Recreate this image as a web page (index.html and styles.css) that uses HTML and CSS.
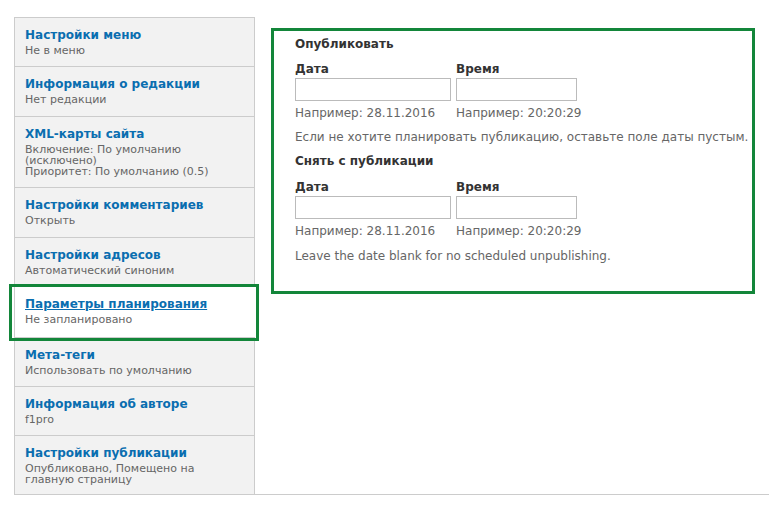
FILE: index.html
```html
<!DOCTYPE html>
<html lang="ru">
<head>
    <meta charset="UTF-8">
    <title>Параметры планирования</title>
    <link rel="stylesheet" href="styles.css">
</head>
<body>
    <div class="vertical-tabs">
        <ul class="tabs-menu">
            <li class="tab-item">
                <a href="#" class="tab-title">Настройки меню</a>
                <div class="tab-summary">Не в меню</div>
            </li>
            <li class="tab-item">
                <a href="#" class="tab-title">Информация о редакции</a>
                <div class="tab-summary">Нет редакции</div>
            </li>
            <li class="tab-item">
                <a href="#" class="tab-title">XML-карты сайта</a>
                <div class="tab-summary">Включение: По умолчанию (исключено)<br>Приоритет: По умолчанию (0.5)</div>
            </li>
            <li class="tab-item">
                <a href="#" class="tab-title">Настройки комментариев</a>
                <div class="tab-summary">Открыть</div>
            </li>
            <li class="tab-item">
                <a href="#" class="tab-title">Настройки адресов</a>
                <div class="tab-summary">Автоматический синоним</div>
            </li>
            <li class="tab-item selected">
                <a href="#" class="tab-title">Параметры планирования</a>
                <div class="tab-summary">Не запланировано</div>
            </li>
            <li class="tab-item">
                <a href="#" class="tab-title">Мета-теги</a>
                <div class="tab-summary">Использовать по умолчанию</div>
            </li>
            <li class="tab-item">
                <a href="#" class="tab-title">Информация об авторе</a>
                <div class="tab-summary">f1pro</div>
            </li>
            <li class="tab-item">
                <a href="#" class="tab-title">Настройки публикации</a>
                <div class="tab-summary">Опубликовано, Помещено на главную страницу</div>
            </li>
        </ul>

        <div class="tabs-pane">
            <div class="scheduler">
                <div class="group">
                    <div class="group-title">Опубликовать</div>
                    <div class="fields">
                        <div class="field field-date">
                            <label>Дата</label>
                            <input type="text">
                            <div class="field-desc">Например: 28.11.2016</div>
                        </div>
                        <div class="field field-time">
                            <label>Время</label>
                            <input type="text">
                            <div class="field-desc">Например: 20:20:29</div>
                        </div>
                    </div>
                    <div class="group-desc">Если не хотите планировать публикацию, оставьте поле даты пустым.</div>
                </div>

                <div class="group">
                    <div class="group-title">Снять с публикации</div>
                    <div class="fields">
                        <div class="field field-date">
                            <label>Дата</label>
                            <input type="text">
                            <div class="field-desc">Например: 28.11.2016</div>
                        </div>
                        <div class="field field-time">
                            <label>Время</label>
                            <input type="text">
                            <div class="field-desc">Например: 20:20:29</div>
                        </div>
                    </div>
                    <div class="group-desc">Leave the date blank for no scheduled unpublishing.</div>
                </div>
            </div>
        </div>
    </div>
</body>
</html>
```

FILE: styles.css
```css
* {
    margin: 0;
    padding: 0;
    box-sizing: border-box;
}

body {
    font-family: 'DejaVu Sans', 'Liberation Sans', sans-serif;
    background: white;
    color: #333;
}

.vertical-tabs {
    display: flex;
    align-items: stretch;
    margin: 17px 0 0 14px;
    border-bottom: 1px solid #ccc;
}

/* left menu */

.tabs-menu {
    list-style: none;
    width: 241px;
    flex-shrink: 0;
    background: #f2f2f2;
    border: 1px solid #ccc;
    border-bottom: none;
}

.tab-item {
    position: relative;
    padding: 9px 10px 10px 10px;
    border-bottom: 1px solid #ccc;
}

.tab-item:last-child {
    border-bottom: none;
    padding-bottom: 8px;
}

.tab-title {
    display: block;
    font-size: 12px;
    line-height: 16px;
    font-weight: bold;
    color: #0a6eb0;
    text-decoration: none;
}

.tab-summary {
    margin-top: 2px;
    font-size: 11px;
    line-height: 11.25px;
    color: #666;
}

.tab-item.selected {
    background: white;
    margin-right: -1px;
    padding-bottom: 11.5px;
}

.tab-item.selected .tab-title {
    text-decoration: underline;
}

/* green highlight round the active tab */
.tab-item.selected::after {
    content: '';
    position: absolute;
    left: -6px;
    right: -4px;
    top: -3px;
    bottom: -4px;
    border: 3px solid #13863a;
}

/* right pane */

.tabs-pane {
    flex: 1;
    padding: 11px 14px 0 16px;
}

.scheduler {
    border: 3px solid #13863a;
    padding: 5px 4px 27px 21px;
}

.group-title {
    font-size: 12px;
    line-height: 16px;
    font-weight: bold;
    color: #333;
}

.group + .group {
    margin-top: 8px;
}

.fields {
    display: flex;
    gap: 5px;
    margin-top: 9px;
}

.group + .group .fields {
    margin-top: 10px;
}

.field label {
    display: block;
    font-size: 12px;
    line-height: 16px;
    font-weight: bold;
    color: #333;
    margin-bottom: 1px;
}

.field input {
    display: block;
    height: 23px;
    border: 1px solid #bbb;
    background: white;
    font-family: inherit;
    font-size: 12px;
}

.field-date input {
    width: 156px;
}

.field-time input {
    width: 121px;
}

.field-desc {
    margin-top: 4px;
    font-size: 12px;
    line-height: 16px;
    color: #666;
    white-space: nowrap;
}

.group-desc {
    margin-top: 8px;
    font-size: 12px;
    line-height: 16px;
    color: #666;
    white-space: nowrap;
}

.group + .group .group-desc {
    margin-top: 9px;
}
```
